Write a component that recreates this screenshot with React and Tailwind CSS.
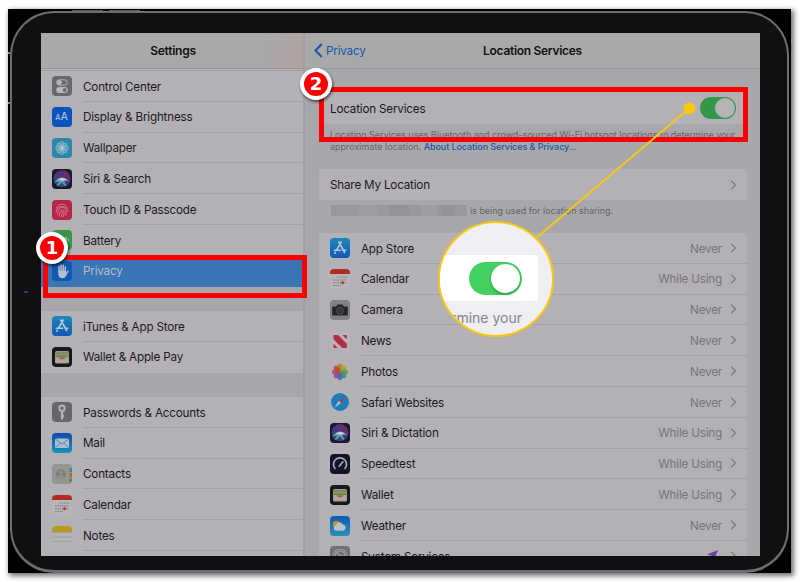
const icons = {
  control: (
    <>
      <rect width="20" height="20" rx="4" fill="#69696c" />
      <rect x="4.6" y="3.8" width="10.8" height="5.4" rx="2.7" fill="none" stroke="#b9b9bb" strokeWidth="0.9" />
      <circle cx="7.4" cy="6.5" r="2.4" fill="#b9b9bb" />
      <rect x="4.2" y="11" width="11.6" height="6" rx="3" fill="#b9b9bb" />
      <circle cx="12.7" cy="14" r="2" fill="#69696c" />
    </>
  ),
  display: (
    <>
      <rect width="20" height="20" rx="4" fill="#0a55bd" />
      <text x="3.2" y="13.4" fontSize="7.5" fontWeight="500" fill="#aebfd8">A</text>
      <text x="8.8" y="13.4" fontSize="10" fontWeight="500" fill="#aebfd8">A</text>
    </>
  ),
  wallpaper: (
    <>
      <rect width="20" height="20" rx="4" fill="#2b88ac" />
      <g fill="#7fb2c6" fillOpacity="0.45" stroke="#a5c5d1" strokeWidth="0.6">
        {[0, 45, 90, 135, 180, 225, 270, 315].map((a) => (
          <ellipse key={a} cx="10" cy="6.6" rx="2" ry="3" transform={`rotate(${a} 10 10)`} />
        ))}
      </g>
      <circle cx="10" cy="10" r="1.5" fill="#b5ccd4" />
    </>
  ),
  siri: (
    <>
      <defs>
        <linearGradient id="siri" x1="0" y1="1" x2="1" y2="0">
          <stop stopColor="#1f6a8c" />
          <stop offset="0.5" stopColor="#5a3a90" />
          <stop offset="1" stopColor="#9a2a74" />
        </linearGradient>
      </defs>
      <rect width="20" height="20" rx="4" fill="#19182c" />
      <circle cx="10" cy="9.8" r="8.5" fill="url(#siri)" fillOpacity="0.8" />
      <path d="M2.500 14C5 8 11 6 17.500 12.500c-2.500-1-4-.8-5 0l2 4.500c-2 0-3.500-1.500-4.500-4-1 2-3 4-5.500 4 1.200-1.500 1.800-3 2.200-4.200-1.500 0-3 .2-4.200 1.200z" fill="#4f9fb0" />
      <path d="M5.500 11.500c2.500-3.500 6.500-4 10 0-2.200-.8-3.700-.5-5 1-1.200-1.200-3-1.500-5-1z" fill="#d0c7d1" />
    </>
  ),
  touch: (
    <>
      <rect width="20" height="20" rx="4" fill="#b42549" />
      <g fill="none" stroke="#d88099" strokeWidth="0.9" strokeLinecap="round">
        <path d="M4.500 8C6 2.800 14 2.800 15.500 8" />
        <path d="M4 12C4 5 15.500 4.500 16 11.500" />
        <path d="M5.500 14.500c.7-2 .2-3 1-5 1.500-3.300 7-2.600 7.500 1.500.1 1.500 0 3-.3 4.300" />
        <path d="M7.300 16c1-3 .5-3.500 1-5 .6-1.600 3.500-1.500 3.700.5.1 2-.2 3.400-.8 5.200" />
        <path d="M10.200 11.500c0 2-.3 3.500-1 5.200" />
      </g>
    </>
  ),
  battery: (
    <>
      <rect width="20" height="20" rx="4" fill="#389747" />
      <rect x="4" y="7" width="11" height="6" rx="1.500" fill="#a9c8ae" />
      <rect x="15.800" y="8.800" width="1" height="2.500" rx="0.5" fill="#a9c8ae" />
    </>
  ),
  privacy: (
    <>
      <rect width="20" height="20" rx="4" fill="#1159b4" />
      <g stroke="#b7bfcc" strokeWidth="1.500" strokeLinecap="round">
        <path d="M7 11V5.200M9.100 10V3.900M11.200 10V4.200M13.300 11V5.800M14 13l2-2.700" />
      </g>
      <path d="M6.300 9.500h7.700v3l1 .5c-1 2.800-2.300 4.200-4.600 4.200-2.600 0-4.100-1.600-4.100-4.200z" fill="#b7bfcc" />
    </>
  ),
  appstore: (
    <>
      <defs>
        <linearGradient id="store" x2="0" y2="1">
          <stop stopColor="#1c89b9" />
          <stop offset="1" stopColor="#1257b2" />
        </linearGradient>
      </defs>
      <rect width="20" height="20" rx="4" fill="url(#store)" />
      <path d="M11.200 4 6.500 12.200M8.800 4l5.800 10.500M4.300 12.300h6.200M13.300 12.300h2.500M5.300 14.300l-.5.900" stroke="#b9c9d7" strokeWidth="1.600" strokeLinecap="round" />
    </>
  ),
  wallet: (
    <>
      <rect width="20" height="20" rx="4" fill="#19191a" />
      <rect x="3" y="4" width="14" height="12.500" rx="1.500" fill="#9b9b94" />
      <rect x="3.600" y="5" width="12.800" height="2" fill="#6b8d93" />
      <rect x="3.600" y="6.800" width="12.800" height="1.800" fill="#b38c25" />
      <rect x="3.600" y="8.400" width="12.800" height="1.800" fill="#589250" />
      <path d="M3.600 10.300h12.800v5.200H3.600z" fill="#aaa9a3" />
      <path d="M6.500 10.300h7c-.6 2.900-6.400 2.900-7 0z" fill="#b95850" />
    </>
  ),
  key: (
    <>
      <rect width="20" height="20" rx="4" fill="#67676b" />
      <circle cx="10" cy="6.200" r="2.700" fill="none" stroke="#b5b5b8" strokeWidth="1.900" />
      <path d="M8.900 9h2.300v8l-1.100 1-1.200-1z" fill="#b5b5b8" />
      <path d="M11 13h.9v2H11z" fill="#b5b5b8" />
    </>
  ),
  mail: (
    <>
      <defs>
        <linearGradient id="mail" x2="0" y2="1">
          <stop stopColor="#134ab0" />
          <stop offset="1" stopColor="#1595b7" />
        </linearGradient>
      </defs>
      <rect width="20" height="20" rx="4" fill="url(#mail)" />
      <rect x="3" y="5.500" width="14" height="9.500" rx="1.500" fill="#aebfcb" />
      <path d="m3.600 6.200 6.400 5 6.400-5M3.800 14.300l4.300-4M16.200 14.300l-4.300-4" fill="none" stroke="#2875ad" strokeWidth="0.8" />
    </>
  ),
  contacts: (
    <>
      <rect width="20" height="20" rx="4" fill="#96958f" />
      <path d="M17.500 4H20v4h-2.500z" fill="#3284a8" />
      <path d="M17.500 9H20v4.500h-2.500z" fill="#b86a20" />
      <path d="M17.500 14.500H20v2q-.5 2-2.500 2z" fill="#3e9552" />
      <circle cx="8.800" cy="10" r="5" fill="#7f7e7a" />
      <circle cx="8.800" cy="8.600" r="1.800" fill="#93918c" />
      <path d="M5.600 13.200c.8-2.800 5.600-2.800 6.400 0-1.500 1.700-4.900 1.700-6.400 0z" fill="#93918c" />
    </>
  ),
  calendar: (
    <>
      <rect width="20" height="20" rx="4" fill="#b7b5b8" />
      <path d="M0 5V4q0-4 4-4h12q4 0 4 4v1z" fill="#b32a25" />
      <path d="M7.500 8h10M3 11h14M3 13.800h14M3 16.600h8" stroke="#77757b" strokeWidth="0.9" strokeDasharray="1.500 .8" />
      <circle cx="12.600" cy="13.800" r="1.500" fill="#c5302b" />
    </>
  ),
  notes: (
    <>
      <rect width="20" height="20" rx="4" fill="#b5b3b4" />
      <path d="M0 6V4q0-4 4-4h12q4 0 4 4v2z" fill="#b99a20" />
      <path d="M0 6.300h20" stroke="#847a5d" strokeWidth="0.6" strokeDasharray="1 .7" />
      <path d="M0 11h20M0 15.500h20" stroke="#98969a" strokeWidth="0.700" />
    </>
  ),
  camera: (
    <>
      <rect width="20" height="20" rx="4" fill="#828184" />
      <path d="M3 6.500h3.200l1.200-2h5.200l1.200 2H17q.8 0 .8.800v7.400q0 .8-.8.800H3q-.8 0-.8-.8V7.300q0-.8.8-.8z" fill="#242427" />
      <circle cx="10" cy="10.700" r="3.300" fill="none" stroke="#68686b" strokeWidth="0.800" />
      <circle cx="10" cy="10.700" r="1.700" fill="#3b3b3e" />
    </>
  ),
  news: (
    <>
      <rect width="20" height="20" rx="4" fill="#b6b4b8" />
      <path d="M3.500 4H8l8.800 8.800V17h-4.500L3.500 8.300zM12.500 4h4.300v4.300zM3.500 12.700V17h4.300z" fill="#b52a49" />
    </>
  ),
  photos: (
    <>
      <rect width="20" height="20" rx="4" fill="#b4b2b6" />
      {["#b87a20", "#aaa625", "#579a45", "#3d8c7d", "#426aa9", "#7c4c9b", "#ae4472", "#b9462f"].map((c, i) => (
        <ellipse key={c} cx="10" cy="5.700" rx="2.600" ry="3.900" fill={c} fillOpacity="0.85" transform={`rotate(${i * 45} 10 10)`} />
      ))}
    </>
  ),
  safari: (
    <>
      <rect width="20" height="20" rx="4" fill="#b4b2b6" />
      <circle cx="10" cy="10" r="9" fill="#1d7dbb" />
      <path d="m15.700 4.300-4.600 7-2-2z" fill="#bd3430" />
      <path d="m4.300 15.700 4.600-7 2 2.200z" fill="#b9c4ce" />
    </>
  ),
  speedtest: (
    <>
      <rect width="20" height="20" rx="4" fill="#121427" />
      <path d="M5.500 15a6.500 6.500 0 1 1 9 0" fill="none" stroke="#aaa9b2" strokeWidth="1.700" />
      <path d="m9.300 12.200 3.600-4.400" stroke="#aaa9b2" strokeWidth="1.700" strokeLinecap="round" />
    </>
  ),
  weather: (
    <>
      <defs>
        <linearGradient id="sky" x2="0" y2="1">
          <stop stopColor="#1159b4" />
          <stop offset="1" stopColor="#2a8fbd" />
        </linearGradient>
      </defs>
      <rect width="20" height="20" rx="4" fill="url(#sky)" />
      <circle cx="6.500" cy="8.300" r="3.600" fill="#bd981f" />
      <path d="M6 14.800a2.700 2.700 0 0 1-.2-5.300 3.800 3.800 0 0 1 7-1 3.300 3.300 0 0 1 .9 6.300z" fill="#b9c2c8" />
    </>
  ),
  system: (
    <>
      <rect width="20" height="20" rx="4" fill="#6f6f73" />
      <circle cx="10" cy="10" r="6.800" fill="none" stroke="#a3a3a7" strokeWidth="1.600" strokeDasharray="1.300 .7" />
      <circle cx="10" cy="10" r="5" fill="none" stroke="#a3a3a7" strokeWidth="1.100" />
      <path d="M10 10 7 6M10 10h5M10 10l-3 4" stroke="#a3a3a7" strokeWidth="1.200" />
      <circle cx="10" cy="10" r="1.500" fill="#a3a3a7" />
    </>
  ),
};

const groups = [
  [
    ["control", "Control Center"],
    ["display", "Display & Brightness"],
    ["wallpaper", "Wallpaper"],
    ["siri", "Siri & Search"],
    ["touch", "Touch ID & Passcode"],
    ["battery", "Battery"],
    ["privacy", "Privacy"],
  ],
  [
    ["appstore", "iTunes & App Store"],
    ["wallet", "Wallet & Apple Pay"],
  ],
  [
    ["key", "Passwords & Accounts"],
    ["mail", "Mail"],
    ["contacts", "Contacts"],
    ["calendar", "Calendar"],
    ["notes", "Notes"],
  ],
];

const apps = [
  ["appstore", "App Store", "Never"],
  ["calendar", "Calendar", "While Using"],
  ["camera", "Camera", "Never"],
  ["news", "News", "Never"],
  ["photos", "Photos", "Never"],
  ["safari", "Safari Websites", "Never"],
  ["siri", "Siri & Dictation", "While Using"],
  ["speedtest", "Speedtest", "While Using"],
  ["wallet", "Wallet", "While Using"],
  ["weather", "Weather", "Never"],
  ["system", "System Services", ""],
];

const Icon = ({ name }) => (
  <svg className="w-5 h-5 shrink-0" viewBox="0 0 20 20">
    {icons[name]}
  </svg>
);

const Chevron = () => (
  <svg className="w-[7px] h-[10px] shrink-0" viewBox="0 0 7 10" fill="none">
    <path d="m1 .8 4.500 4.200L1 9.200" stroke="#7f7e83" strokeWidth="1.300" />
  </svg>
);

const SidebarRow = ({ name, label, last }) => {
  const active = name === "privacy";
  return (
    <div className={`flex h-[30.8px] items-center pl-[11px] ${active ? "bg-[#3a75b5]" : ""}`}>
      <Icon name={name} />
      <div
        className={`ml-[11px] flex h-full flex-1 items-center border-b pt-[3px] ${
          active ? "text-[#b5bdca]" : ""
        } ${last ? "border-transparent" : "border-[#a2a1a5]"}`}
      >
        {label}
      </div>
    </div>
  );
};

const Sidebar = () => (
  <div className="w-[264px] shrink-0 overflow-hidden border-r-2 border-[#a09fa3] bg-[#b3b1b5]">
    <div className="flex h-[36px] items-center justify-center border-b border-[#98979a] bg-linear-to-r from-[#a9a9aa] from-85% to-[#b0a2a3] pl-[2px] pt-px text-[12px] font-semibold tracking-[-0.25px] text-[#111]">
      Settings
    </div>
    <div className="h-[2px] border-b border-[#a2a1a5]" />
    {groups.map((rows, i) => (
      <div key={i}>
        {i > 0 && <div className="h-[24.400px] bg-[#a7a6aa]" />}
        {rows.map(([name, label], j) => (
          <SidebarRow key={name} name={name} label={label} last={i < 2 && j === rows.length - 1} />
        ))}
      </div>
    ))}
  </div>
);

const Detail = () => (
  <div className="flex-1 overflow-hidden bg-[#a8a7ab]">
    {/* HEADER */}
    <div className="grid h-[36px] grid-cols-[1fr_auto_1fr] items-center border-b border-[#98979a] bg-[#a9a9aa]">
      <div className="flex items-center gap-[3px] pl-[9px] pt-px text-[#1458a8]">
        <svg className="h-[15px] w-[9px]" viewBox="0 0 9 15" fill="none">
          <path d="M7.800 1 1.500 7.500 7.800 14" stroke="currentColor" strokeWidth="2" />
        </svg>
        <span className="pt-[2px]">Privacy</span>
      </div>
      <div className="pt-px text-[12px] font-semibold tracking-[-0.3px] text-[#111]">Location Services</div>
    </div>

    <div className="pl-[14px] pr-[13px] pt-[23px]">
      {/* MAIN SWITCH */}
      <div className="flex h-[32px] items-center justify-between rounded-[3px] bg-[#b3b1b5] pl-[11px] pr-[11px]">
        <span className="pt-[3px]">Location Services</span>
        <div className="flex h-[22px] w-[36px] justify-end rounded-full bg-[#33984a] p-[1px]">
          <div className="h-[20px] w-[20px] rounded-full bg-[#b5b4b7]" />
        </div>
      </div>
      <div className="h-[45px] whitespace-nowrap pl-[11px] pt-[5px] text-[8.970px] leading-[11.500px] tracking-normal text-[#646368]">
        Location Services uses Bluetooth and crowd-sourced Wi-Fi hotspot locations to determine your
        <br />
        approximate location.{" "}
        <span className="font-medium tracking-[-0.06px] text-[#1458a8]">About Location Services &amp; Privacy...</span>
      </div>

      {/* SHARE */}
      <div className="flex h-[31px] items-center justify-between rounded-[3px] bg-[#b3b1b5] pl-[11px] pr-[10px]">
        <span className="pt-[3px]">Share My Location</span>
        <Chevron />
      </div>
      <div className="flex h-[33px] items-start gap-[3px] pl-[12px] pt-[5px] text-[8.950px] leading-[12px] tracking-normal text-[#646368]">
        <div className="flex h-[11px] w-[136px] bg-[#99989c]">
          <div className="ml-[28px] w-[18px] bg-[#9e9da1]" />
          <div className="ml-[12px] w-[20px] bg-[#949397]" />
          <div className="ml-[12px] w-[16px] bg-[#9e9da1]" />
          <div className="ml-[4px] w-[14px] bg-[#949397]" />
        </div>
        is being used for location sharing.
      </div>

      {/* APPS */}
      <div className="rounded-t-[3px] bg-[#b3b1b5] pl-[11px]">
        {apps.map(([name, label, value]) => (
          <div key={name} className="flex h-[30.800px] items-center">
            <Icon name={name} />
            <div className="ml-[11px] flex h-full flex-1 items-center border-b border-[#a2a1a5] pr-[10px]">
              <span className="flex-1 pt-[3px]">{label}</span>
              {value && <span className="mr-[8px] pt-[3px] text-[#77767b]">{value}</span>}
              {name === "system" && (
                <svg className="mr-[12px] h-[11px] w-[11px]" viewBox="0 0 11 11">
                  <path d="M11 0 6.500 11 5 6 0 4.500z" fill="#6d3da5" />
                </svg>
              )}
              <Chevron />
            </div>
          </div>
        ))}
      </div>
    </div>
  </div>
);

const Badge = ({ children }) => (
  <div className="flex h-[32px] w-[32px] items-center justify-center rounded-full border-4 border-white bg-[#fb0000] font-['DejaVu_Sans'] text-[18px] font-bold leading-none text-white shadow-[1px_2px_3px_rgba(0,0,0,0.6)]">
    {children}
  </div>
);

export default function App() {
  return (
    <div className="relative h-[582px] w-[800px] overflow-hidden bg-white pl-[8px] pt-[9px] font-['Inter',sans-serif] text-[11.700px] tracking-[-0.2px] text-[#1b1a1d]">
      {/* TABLET */}
      <div className="h-[564px] w-[783px] bg-black pl-[2px] pt-[2px] shadow-[2px_2px_5px_1px_rgba(0,0,0,0.55)]">
        <div className="h-[562px] w-[779px] rounded-[44px] border-2 border-b-[3px] border-[#6d6d73] bg-[#101011] pl-[29px] pt-[20px]">
          <div className="flex h-[523px] w-[719px] overflow-hidden">
            <Sidebar />
            <Detail />
          </div>
        </div>
      </div>
      <div className="absolute left-[72px] top-[10px] h-px w-[31px] bg-[#5a5a5e]" />
      <div className="absolute left-[109px] top-[10px] h-px w-[31px] bg-[#5a5a5e]" />
      <div className="absolute left-[8px] top-[52px] h-[2px] w-[2px] bg-[#8a8a90]" />
      <div className="absolute left-[8px] top-[102px] h-[2px] w-[2px] bg-[#8a8a90]" />
      <div className="absolute left-[24px] top-[291px] h-[2px] w-[4px] bg-[#1a4488]" />

      {/* CALLOUTS */}
      <div className="absolute left-[43px] top-[255px] h-[43px] w-[264px] border-5 border-[#fb0000]" />
      <div className="absolute left-[319px] top-[87px] h-[55px] w-[429px] border-5 border-[#fb0000]" />
      <svg className="absolute left-0 top-0 h-[582px] w-[800px]" viewBox="0 0 800 582">
        <path d="M689 108.500 535 239" stroke="#fbc90a" strokeWidth="1.800" />
        <circle cx="689.300" cy="108.500" r="6" fill="#fbc90a" />
      </svg>
      <div className="absolute left-[36px] top-[232px]">
        <Badge>1</Badge>
      </div>
      <div className="absolute left-[300px] top-[68px]">
        <Badge>2</Badge>
      </div>

      {/* MAGNIFIER */}
      <div className="absolute left-[438px] top-[221px] h-[116px] w-[116px] overflow-hidden rounded-full border-2 border-[#f5c814] bg-[#efeef3] pt-[32px]">
        <div className="flex h-[46px] w-[98px] items-center justify-end rounded-r-[3px] bg-white pr-[16px]">
          <div className="flex h-[33px] w-[53px] justify-end rounded-full bg-[#44d060] p-[2px]">
            <div className="h-[29px] w-[29px] rounded-full bg-white shadow-[0_2px_3px_rgba(0,0,0,0.25)]" />
          </div>
        </div>
        <div className="flex w-[82px] justify-end whitespace-nowrap pt-[7px] text-[14px] leading-[20px] tracking-normal text-[#858489]">
          rmine your
        </div>
      </div>
    </div>
  );
}
